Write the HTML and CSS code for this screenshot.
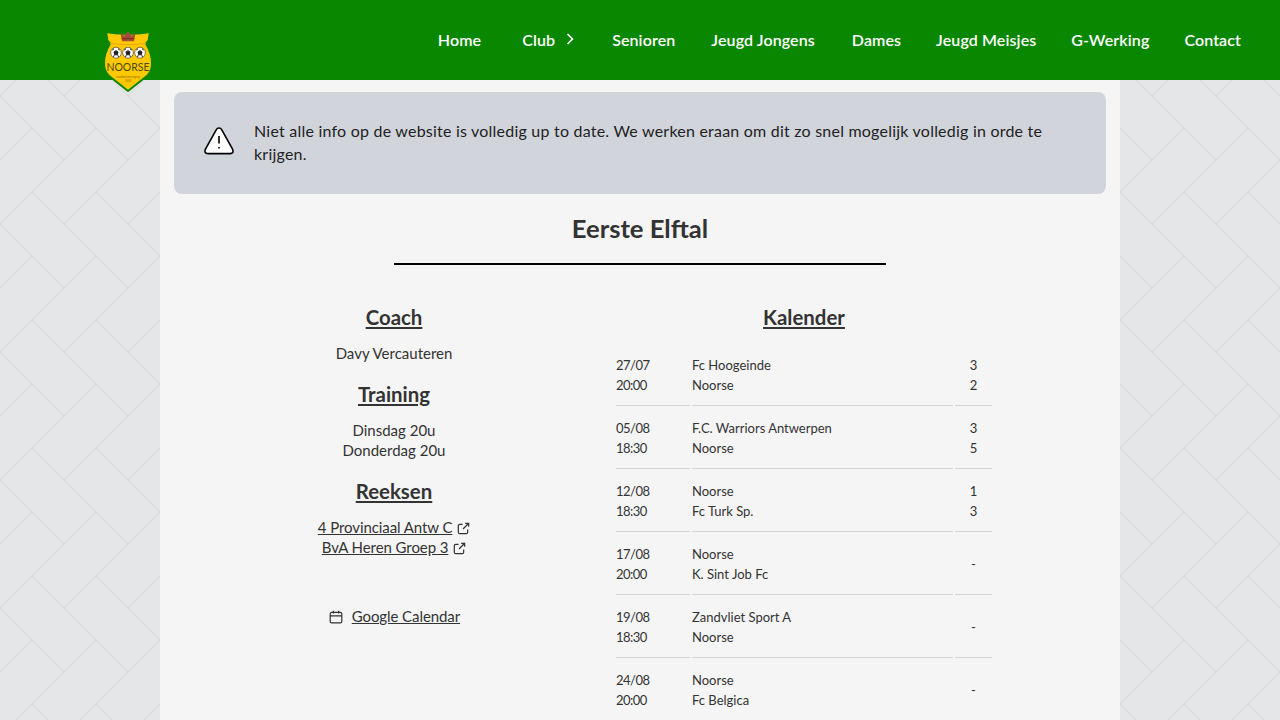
FILE: index.html
```html
<!DOCTYPE html>
<html lang="nl">
<head>
    <meta charset="UTF-8">
    <title>Eerste Elftal - Noorse</title>
    <link rel="stylesheet" href="styles.css">
</head>
<body>

    <header class="navbar">
        <svg class="logo" viewBox="3 5 50 59" width="50" height="61" preserveAspectRatio="none">
            <defs>
                <g id="ball">
                    <circle r="5.3" fill="#fff" stroke="#333" stroke-width="0.6"/>
                    <path d="M0 -2 l2 1.5 -.8 2.4 h-2.4 l-.8 -2.4 Z M-3.6 -2.4 l1.5 -1.7 M3.6 -2.4 l-1.5 -1.7 M-3 3.6 l1.6 -.8 M3 3.6 l-1.6 -.8" fill="#222" stroke="#222" stroke-width="1"/>
                </g>
            </defs>
            <path d="M6 6 Q17 8 28 7.5 Q39 8 50 6 L48.5 14.5 L46 17 Q52 27 52 36 Q52 44 47.5 48 L28 63 L8.5 48 Q4 44 4 36 Q4 27 10 17 L7.5 14.5 Z" fill="#ffc800" stroke="#0a8700" stroke-width="2" stroke-linejoin="round"/>
            <path d="M10 17 Q28 19 46 17" fill="none" stroke="#e8a800" stroke-width="1"/>
            <path d="M22 15 L20.5 7 L24.5 9.5 L28 5.5 L31.5 9.5 L35.5 7 L34 15 Z" fill="#a5503a"/>
            <path d="M22 12.5 H34" stroke="#7a2a20" stroke-width="1"/>
            <use href="#ball" x="16" y="26"/>
            <use href="#ball" x="28" y="26"/>
            <use href="#ball" x="40" y="26"/>
            <text class="logo-name" x="28" y="44" text-anchor="middle">NOORSE</text>
            <text class="logo-sub" x="28" y="50.5" text-anchor="middle">voetbalvereniging</text>
            <text class="logo-sub" x="28" y="54.5" text-anchor="middle">1934</text>
        </svg>
        <nav class="menu">
            <a class="home" href="#">Home</a>
            <a class="club" href="#">Club
                <svg viewBox="0 0 12 12" width="12" height="12"><path d="M3.5 1 L8.5 6 L3.5 11" fill="none" stroke="#fff" stroke-width="1.6"/></svg>
            </a>
            <a class="senioren" href="#">Senioren</a>
            <a class="jongens" href="#">Jeugd Jongens</a>
            <a href="#">Dames</a>
            <a href="#">Jeugd Meisjes</a>
            <a href="#">G-Werking</a>
            <a href="#">Contact</a>
        </nav>
    </header>

    <main class="content">
        <div class="alert">
            <svg viewBox="0 0 30 28" width="30" height="28">
                <path d="M15 1 Q16.8 1 17.8 2.8 L28.4 21.8 Q30.4 26.6 26 26.6 L4 26.6 Q-0.4 26.6 1.6 21.8 L12.2 2.8 Q13.2 1 15 1 Z" fill="#fff" stroke="#000" stroke-width="1.6" stroke-linejoin="round"/>
                <path d="M15 9 L15 16.5 M15 20 L15 21.6" stroke="#000" stroke-width="1.6" fill="none"/>
            </svg>
            <p>Niet alle info op de website is volledig up to date. We werken eraan om dit zo snel mogelijk volledig in orde te krijgen.</p>
        </div>

        <h1>Eerste Elftal</h1>
        <hr>

        <div class="columns">
            <section class="info">
                <h2>Coach</h2>
                <p>Davy Vercauteren</p>
                <h2>Training</h2>
                <p>Dinsdag 20u<br>Donderdag 20u</p>
                <h2>Reeksen</h2>
                <p>
                    <a href="#">4 Provinciaal Antw C</a>
                    <svg class="ext" viewBox="0 0 14 14" width="13" height="13"><path d="M6 2.5 H3 A1.6 1.6 0 0 0 1.4 4.1 V11 A1.6 1.6 0 0 0 3 12.6 H9.9 A1.6 1.6 0 0 0 11.5 11 V8 M6.5 7.5 L12.6 1.4 M8.8 1.4 H12.6 V5.2" fill="none" stroke="#333" stroke-width="1.3"/></svg>
                    <br>
                    <a href="#">BvA Heren Groep 3</a>
                    <svg class="ext" viewBox="0 0 14 14" width="13" height="13"><path d="M6 2.5 H3 A1.6 1.6 0 0 0 1.4 4.1 V11 A1.6 1.6 0 0 0 3 12.6 H9.9 A1.6 1.6 0 0 0 11.5 11 V8 M6.5 7.5 L12.6 1.4 M8.8 1.4 H12.6 V5.2" fill="none" stroke="#333" stroke-width="1.3"/></svg>
                </p>
                <p class="calendar">
                    <svg viewBox="0 0 14 14" width="14" height="14"><path d="M2.6 2.4 H11.4 A1.4 1.4 0 0 1 12.8 3.8 V11.4 A1.4 1.4 0 0 1 11.4 12.8 H2.6 A1.4 1.4 0 0 1 1.2 11.4 V3.8 A1.4 1.4 0 0 1 2.6 2.4 Z M4.4 0.8 V3.6 M9.6 0.8 V3.6 M1.2 5.8 H12.8" fill="none" stroke="#333" stroke-width="1.2"/></svg>
                    <a href="#">Google Calendar</a>
                </p>
            </section>

            <section class="kalender">
                <h2>Kalender</h2>
                <table>
                    <tbody>
                        <tr><td class="datum">27/07<br>20:00</td><td class="ploeg">Fc Hoogeinde<br>Noorse</td><td class="score">3<br>2</td></tr>
                        <tr><td class="datum">05/08<br>18:30</td><td class="ploeg">F.C. Warriors Antwerpen<br>Noorse</td><td class="score">3<br>5</td></tr>
                        <tr><td class="datum">12/08<br>18:30</td><td class="ploeg">Noorse<br>Fc Turk Sp.</td><td class="score">1<br>3</td></tr>
                        <tr><td class="datum">17/08<br>20:00</td><td class="ploeg">Noorse<br>K. Sint Job Fc</td><td class="score">-</td></tr>
                        <tr><td class="datum">19/08<br>18:30</td><td class="ploeg">Zandvliet Sport A<br>Noorse</td><td class="score">-</td></tr>
                        <tr><td class="datum">24/08<br>20:00</td><td class="ploeg">Noorse<br>Fc Belgica</td><td class="score">-</td></tr>
                    </tbody>
                </table>
            </section>
        </div>
    </main>

</body>
</html>
```

FILE: styles.css
```css
html, body {
    height: 100%;
    overflow: hidden;
}

body {
    margin: 0;
    font-family: "Lato", Arial, sans-serif;
    color: #333;
    background-color: #e5e6e8;
    background-image: url("data:image/svg+xml,%3Csvg xmlns='http://www.w3.org/2000/svg' width='64' height='128'%3E%3Cpath d='M32 0 L0 32 M64 32 L0 96 M32 0 L64 32 M32 64 L64 96 M0 96 L32 128' stroke='%23dcdddf' stroke-width='1.5' fill='none'/%3E%3C/svg%3E");
}

.navbar {
    position: relative;
    height: 80px;
    background-color: #0a8700;
}

.logo {
    position: absolute;
    left: 103px;
    top: 31px;
}

.logo-name {
    font-family: "Lato", Arial, sans-serif;
    font-size: 10.5px;
    fill: #4a4a10;
}

.logo-sub {
    font-family: "Liberation Sans", Arial, sans-serif;
    font-size: 3px;
    fill: #8a6a00;
}

.menu {
    display: flex;
    justify-content: flex-end;
    align-items: center;
    gap: 35px;
    height: 78px;
    padding: 0 39px 2px 0;
}

.menu a {
    color: #fff;
    text-decoration: none;
    font-size: 16px;
    font-weight: 600;
    letter-spacing: 0.1px;
}

.menu .home {
    margin-right: 6px;
}

.menu .club {
    display: flex;
    align-items: center;
    gap: 9px;
    margin-right: 1px;
}

.menu .senioren {
    margin-right: 1px;
}

.menu .jongens {
    margin-right: 2px;
}

.content {
    width: 932px;
    min-height: 640px;
    margin: 0 auto 0 160px;
    padding: 12px 14px 0;
    background-color: #f5f5f5;
}

.alert {
    display: flex;
    align-items: center;
    gap: 20px;
    height: 102px;
    box-sizing: border-box;
    padding: 0 30px 2px;
    background-color: #d1d5db;
    border-radius: 8px;
}

.alert svg {
    flex-shrink: 0;
    margin-bottom: 2px;
}

.alert p {
    margin: 0;
    font-size: 16px;
    line-height: 23px;
    letter-spacing: 0.22px;
    color: #222;
}

h1 {
    margin: 17px 0 0;
    text-align: center;
    font-size: 25.6px;
    line-height: 34px;
    font-weight: 700;
}

hr {
    width: 492px;
    height: 2px;
    margin: 18px auto 0;
    border: none;
    background-color: #000;
}

.columns {
    display: grid;
    grid-template-columns: 440px 380px;
    margin-top: 39px;
}

h2 {
    margin: 0;
    text-align: center;
    font-size: 20.4px;
    line-height: 26px;
    font-weight: 700;
    text-decoration: underline;
}

.info {
    text-align: center;
    font-size: 15px;
    line-height: 20px;
}

.info p {
    margin: 13px 0 18px;
}

.info a {
    color: #333;
    letter-spacing: -0.08px;
}

.ext {
    vertical-align: -2px;
    margin-left: 1px;
}

.info .calendar {
    margin-top: 49px;
}

.calendar svg {
    vertical-align: -2px;
    margin: 0 5px 0 1px;
}

.kalender table {
    width: 380px;
    margin-top: 13px;
    table-layout: fixed;
    font-size: 13px;
    line-height: 20.5px;
}

td {
    height: 50px;
    padding: 5px 0 5px;
    border-bottom: 1px solid #d5d5d5;
    vertical-align: middle;
}

.datum {
    width: 74px;
    letter-spacing: -0.5px;
}

.score {
    width: 37px;
    text-align: center;
}
```
